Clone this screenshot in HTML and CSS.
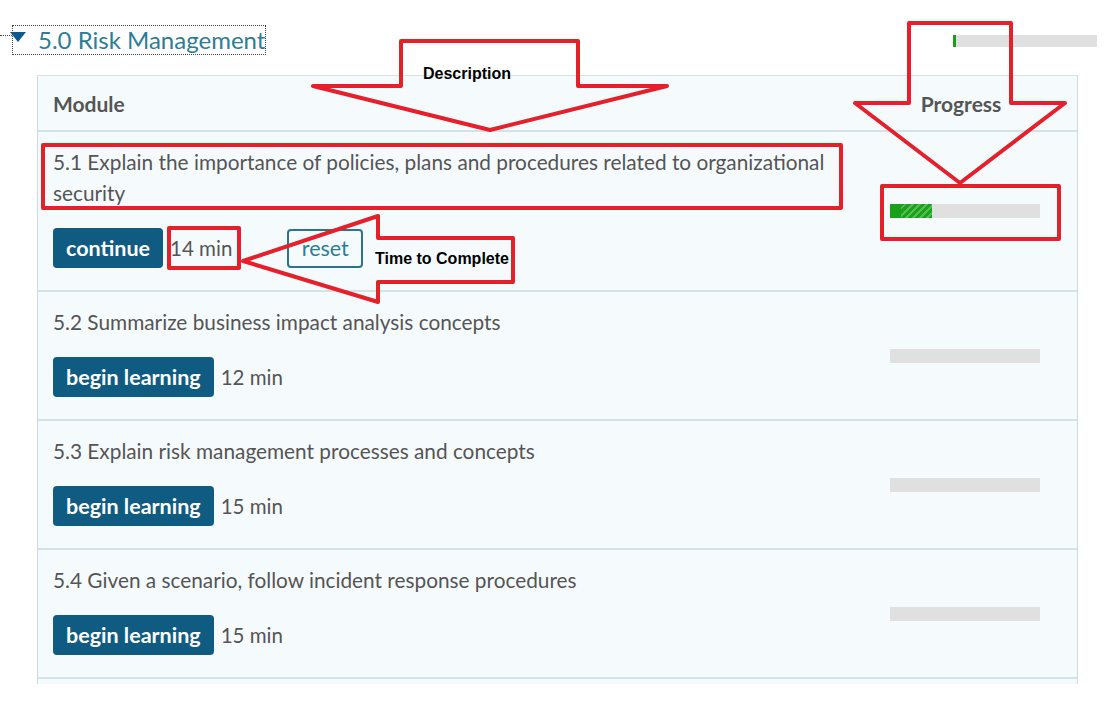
FILE: index.html
```html
<!DOCTYPE html>
<html lang="en">
<head>
<meta charset="utf-8">
<title>5.0 Risk Management</title>
<link rel="stylesheet" href="styles.css">
</head>
<body>
<div class="page">
  <div class="section-head">
    <div class="toggle">
      <span class="caret"></span>
      <span class="title">5.0 Risk Management</span>
    </div>
    <div class="bar bar-top"><span class="fill" style="width:3px"></span></div>
  </div>

  <div class="table">
    <div class="row head">
      <div class="cell-main">Module</div>
      <div class="cell-prog">Progress</div>
    </div>

    <div class="row">
      <div class="cell-main">
        <p class="desc">5.1 Explain the importance of policies, plans and procedures related to organizational security</p>
        <div class="actions">
          <button class="btn">continue</button>
          <span class="time">14 min</span>
          <button class="btn-reset">reset</button>
        </div>
      </div>
      <div class="cell-prog"><div class="bar"><span class="fill" style="width:42px"></span></div></div>
    </div>

    <div class="row">
      <div class="cell-main">
        <p class="desc">5.2 Summarize business impact analysis concepts</p>
        <div class="actions">
          <button class="btn">begin learning</button>
          <span class="time">12 min</span>
        </div>
      </div>
      <div class="cell-prog"><div class="bar"></div></div>
    </div>

    <div class="row">
      <div class="cell-main">
        <p class="desc">5.3 Explain risk management processes and concepts</p>
        <div class="actions">
          <button class="btn">begin learning</button>
          <span class="time">15 min</span>
        </div>
      </div>
      <div class="cell-prog"><div class="bar"></div></div>
    </div>

    <div class="row">
      <div class="cell-main">
        <p class="desc">5.4 Given a scenario, follow incident response procedures</p>
        <div class="actions">
          <button class="btn">begin learning</button>
          <span class="time">15 min</span>
        </div>
      </div>
      <div class="cell-prog"><div class="bar"></div></div>
    </div>
    <div class="row-stub"></div>
  </div>

  <svg class="notes" width="1116" height="706" viewBox="0 0 1116 706">
    <g fill="none" stroke="#e5202b" stroke-width="4" stroke-linejoin="round">
      <polygon points="401,41 578,41 578,86 667,86 490,130 313,86 401,86"/>
      <polygon points="909,23 1011,23 1011,103 1065,103 960,183 855,103 909,103"/>
      <polygon points="243,261 378,216 378,238 513,238 513,282 378,282 378,302"/>
      <rect x="43" y="145" width="798" height="63"/>
      <rect x="882" y="186" width="177" height="53"/>
      <rect x="169" y="228" width="70" height="40"/>
    </g>
    <text class="note-text" x="423" y="79">Description</text>
    <text class="note-text" x="375" y="264">Time to Complete</text>
  </svg>
</div>
</body>
</html>
```
FILE: styles.css
```css
html, body {
  margin: 0;
  padding: 0;
  background: #ffffff;
}
body {
  font-family: Lato, "Open Sans", sans-serif;
  color: #555555;
}
.page {
  position: relative;
  width: 1116px;
  height: 706px;
  overflow: hidden;
}
.section-head {
  display: flex;
  justify-content: space-between;
  align-items: flex-start;
  padding: 25px 19px 0 12px;
  height: 75px;
  box-sizing: border-box;
}
.toggle {
  position: relative;
  display: flex;
  align-items: center;
  height: 30px;
  width: 254px;
  box-sizing: border-box;
  outline: 1px dotted #444;
  outline-offset: -1px;
}
.toggle::before {
  content: "";
  position: absolute;
  left: -12px;
  top: 10px;
  width: 12px;
  border-top: 1px dotted #444;
}
.caret {
  width: 0;
  height: 0;
  margin-left: -2px;
  border-left: 8px solid transparent;
  border-right: 8px solid transparent;
  border-top: 10px solid #0d5a8e;
  margin-top: -6px;
}
.title {
  margin-left: 12px;
  font-size: 24px;
  color: #2d7d96;
  line-height: 30px;
}
.bar {
  width: 150px;
  height: 14px;
  background: #e0e0e0;
  display: flex;
}
.bar-top {
  width: 144px;
  height: 12px;
  margin-top: 10px;
}
.fill {
  display: block;
  height: 100%;
  background:
    linear-gradient(#18a018, #18a018) 0 0 / 11px 100% no-repeat,
    repeating-linear-gradient(135deg, #4dbf4d 0 2px, #1f9f1f 2px 5px);
}
.table {
  margin-left: 37px;
  width: 1041px;
  background: #f5fbfd;
  border-left: 1px solid #cfdcdf;
  border-right: 1px solid #cfdcdf;
  border-top: 1px solid #d6e4e7;
  box-sizing: border-box;
}
.row {
  display: grid;
  grid-template-columns: 1fr 226px;
  border-bottom: 2px solid #d3e2e5;
}
.row.head {
  height: 56px;
  box-sizing: border-box;
  font-weight: 700;
  font-size: 21px;
  align-items: center;
}
.head .cell-main {
  padding-left: 15px;
}
.head .cell-prog {
  text-align: center;
  padding-right: 8px;
}
.cell-main {
  padding: 14px 16px 22px 15px;
}
.cell-prog {
  display: flex;
  align-items: center;
  justify-content: center;
  padding-left: 2px;
}
.row.head .cell-main, .row.head .cell-prog {
  padding-top: 0;
  padding-bottom: 0;
}
.desc {
  margin: 0;
  font-size: 20.8px;
  line-height: 31px;
  color: #555555;
}
.actions {
  display: flex;
  align-items: center;
  margin-top: 20px;
  height: 40px;
}
.btn {
  height: 40px;
  padding: 0 13px;
  border: 0;
  border-radius: 4px;
  background: #0f5b82;
  color: #ffffff;
  font-family: Lato, "Open Sans", sans-serif;
  font-weight: 700;
  font-size: 21.5px;
  line-height: 40px;
}
.time {
  margin-left: 7px;
  font-size: 20.5px;
  color: #555555;
}
.btn-reset {
  margin-left: 55px;
  height: 39px;
  width: 76px;
  padding: 0;
  border: 2px solid #2a7688;
  border-radius: 4px;
  background: transparent;
  color: #2d7d96;
  font-family: Lato, "Open Sans", sans-serif;
  font-size: 21.5px;
}
.row-stub {
  height: 5px;
}
.notes {
  position: absolute;
  left: 0;
  top: 0;
  pointer-events: none;
}
.note-text {
  font-family: "Liberation Sans", Arial, sans-serif;
  font-weight: 700;
  font-size: 16px;
  fill: #000000;
}
```
